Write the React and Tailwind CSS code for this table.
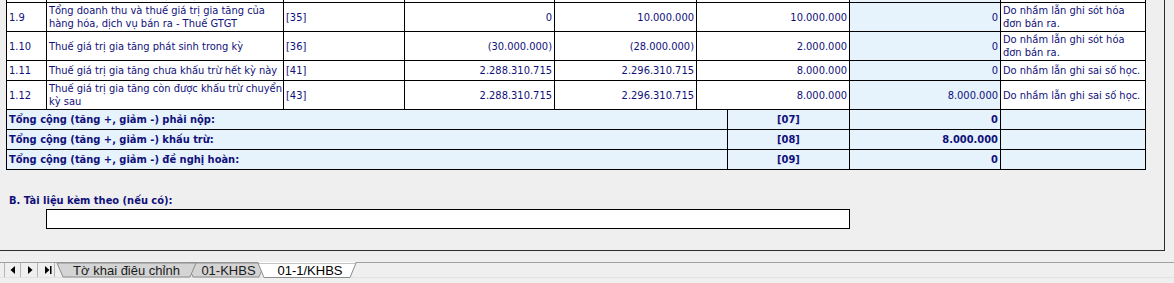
import React from 'react';

const rows = [
  {
    stt: '1.8',
    label: ['Thuế giá trị gia tăng của hàng hóa, dịch vụ mua', 'vào trong kỳ đủ điều kiện được khấu trừ'],
    code: '[34]',
    a: '',
    b: '',
    c: '',
    d: '',
    note: [],
    h: 'h-[29px]',
  },
  {
    stt: '1.9',
    label: ['Tổng doanh thu và thuế giá trị gia tăng của', 'hàng hóa, dịch vụ bán ra - Thuế GTGT'],
    code: '[35]',
    a: '0',
    b: '10.000.000',
    c: '10.000.000',
    d: '0',
    note: ['Do nhầm lẫn ghi sót hóa', 'đơn bán ra.'],
    h: 'h-[29px]',
  },
  {
    stt: '1.10',
    label: ['Thuế giá trị gia tăng phát sinh trong kỳ'],
    code: '[36]',
    a: '(30.000.000)',
    b: '(28.000.000)',
    c: '2.000.000',
    d: '0',
    note: ['Do nhầm lẫn ghi sót hóa', 'đơn bán ra.'],
    h: 'h-[29px]',
  },
  {
    stt: '1.11',
    label: ['Thuế giá trị gia tăng chưa khấu trừ hết kỳ này'],
    code: '[41]',
    a: '2.288.310.715',
    b: '2.296.310.715',
    c: '8.000.000',
    d: '0',
    note: ['Do nhầm lẫn ghi sai số học.'],
    h: 'h-[20px]',
  },
  {
    stt: '1.12',
    label: ['Thuế giá trị gia tăng còn được khấu trừ chuyển', 'kỳ sau'],
    code: '[43]',
    a: '2.288.310.715',
    b: '2.296.310.715',
    c: '8.000.000',
    d: '8.000.000',
    note: ['Do nhầm lẫn ghi sai số học.'],
    h: 'h-[29px]',
  },
];

const totals = [
  { label: 'Tổng cộng (tăng +, giảm -) phải nộp:', code: '[07]', value: '0' },
  { label: 'Tổng cộng (tăng +, giảm -) khấu trừ:', code: '[08]', value: '8.000.000' },
  { label: 'Tổng cộng (tăng +, giảm -) đề nghị hoàn:', code: '[09]', value: '0' },
];

const cell = 'border-r border-b border-black flex items-center px-[2px] leading-[13px]';

function Lines({ items }) {
  return (
    <div className="flex flex-col">
      {items.map((t, i) => (
        <span key={i} className="whitespace-nowrap">{t}</span>
      ))}
    </div>
  );
}

function SheetTabs() {
  return (
    <div className="relative h-[16px] w-full">
      <svg className="absolute inset-0" width="1174" height="16" viewBox="0 0 1174 16">
        <line x1="0" y1="0.5" x2="1174" y2="0.5" stroke="#a0a0a0" />
        <line x1="0" y1="15.5" x2="1174" y2="15.5" stroke="#e2e2e2" />
        {[4.5, 20.5, 37.5, 54.5].map((x) => (
          <line key={x} x1={x} y1="1" x2={x} y2="15" stroke="#b4b4b4" />
        ))}
        <polygon points="10.5,8 15,4 15,12" fill="#000" />
        <polygon points="28,4 28,12 32.5,8" fill="#000" />
        <polygon points="45,4 45,12 49.5,8" fill="#000" />
        <rect x="50" y="4" width="1.5" height="8" fill="#000" />
        <polygon points="187,1 193,15 259,15 265,1" fill="#d4d4d4" stroke="#8c8c8c" />
        <polygon points="57,1 63,15 190,15 196,1" fill="#d4d4d4" stroke="#8c8c8c" />
        <polygon points="258,1 264,15.5 350,15.5 356,1" fill="#ffffff" stroke="#8c8c8c" />
        <line x1="258.5" y1="0.5" x2="355.5" y2="0.5" stroke="#ffffff" />
      </svg>
      <div className="relative flex h-full items-center pl-[57px] text-[13px] leading-none font-['Liberation_Sans',Arial,sans-serif]">
        <span className="w-[139px] text-center text-[#1b1b1b]">Tờ khai điêu chỉnh</span>
        <span className="w-[65px] text-center text-[#1b1b1b]">01-KHBS</span>
        <span className="w-[98px] text-center text-black">01-1/KHBS</span>
      </div>
    </div>
  );
}

export default function App() {
  return (
    <div className="w-[1174px] h-[283px] overflow-hidden bg-[#efefef] font-['DejaVu_Sans_Condensed',Tahoma,'Liberation_Sans',sans-serif] text-[11px] text-[#10107a]">
      <div className="w-[1165px] h-[251px] border-r border-b border-[#2e2e2e] overflow-hidden pl-[6px]">
        {/* data rows, scrolled so that the row above 1.9 is cut off */}
        <div className="mt-[-27px] w-[1140px] border-l border-t border-black">
          {rows.map((r) => (
            <div key={r.stt} className={`grid grid-cols-[40px_237px_121px_150px_142px_153px_151px_145px] bg-white ${r.h}`}>
              <div className={cell}>{r.stt}</div>
              <div className={cell}><Lines items={r.label} /></div>
              <div className={cell}>{r.code}</div>
              <div className={`${cell} justify-end`}>{r.a}</div>
              <div className={`${cell} justify-end`}>{r.b}</div>
              <div className={`${cell} justify-end`}>{r.c}</div>
              <div className={`${cell} justify-end bg-[#e6f2fc]`}>{r.d}</div>
              <div className={cell}><Lines items={r.note} /></div>
            </div>
          ))}
          {totals.map((t) => (
            <div key={t.code} className="grid grid-cols-[721px_122px_151px_145px] h-[20px] bg-[#e6f2fc] font-bold">
              <div className={cell}>{t.label}</div>
              <div className={`${cell} justify-center`}>{t.code}</div>
              <div className={`${cell} justify-end`}>{t.value}</div>
              <div className={cell}></div>
            </div>
          ))}
        </div>

        <div className="mt-[24px] pl-[3px] font-bold leading-[13px]">B. Tài liệu kèm theo (nếu có):</div>
        <div className="mt-[2px] ml-[40px] w-[804px] h-[20px] border border-black bg-white"></div>
      </div>

      <div className="h-[11px]"></div>
      <SheetTabs />
    </div>
  );
}
